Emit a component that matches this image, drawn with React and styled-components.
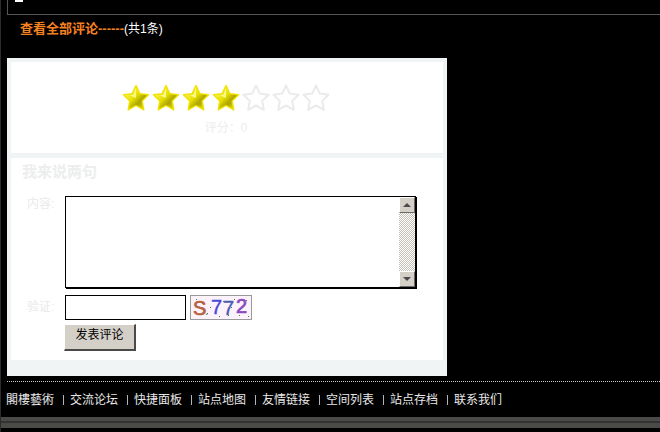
import React from 'react';
import styled, { createGlobalStyle } from 'styled-components';

const GlobalStyle = createGlobalStyle`
  html, body {
    margin: 0;
    padding: 0;
    background: #000;
    overflow: hidden;
  }
  body {
    font-family: "Liberation Sans", "Noto Sans CJK SC", sans-serif;
    font-size: 12px;
  }
`;

const StyledPage = styled.div`
  display: flex;
  flex-direction: column;
  width: 660px;
  height: 432px;
  overflow: hidden;
  background: #000;
  box-sizing: border-box;
  border-left: 1px solid #2c2c2c;
`;

const StyledTopBox = styled.div`
  height: 14px;
  margin-left: 6px;
  padding-left: 7px;
  flex: none;
  box-sizing: content-box;
  border-left: 1px solid #555;
  border-bottom: 1px solid #555;

  i {
    display: block;
    width: 8px;
    height: 2px;
    background: #fff;
  }
`;

const StyledCount = styled.div`
  height: 28px;
  padding-left: 19px;
  flex: none;
  display: flex;
  align-items: center;
  color: #fff;
  line-height: 28px;

  b {
    color: #f58220;
    font-size: 13px;
    font-weight: bold;
  }
`;

const StyledPanel = styled.div`
  width: 440px;
  height: 318px;
  margin: 15px 0 0 6px;
  flex: none;
  background: #f0f4f4;
  padding: 4px 4px 16px;
  box-sizing: border-box;
  display: flex;
  flex-direction: column;
  gap: 5px;
`;

const StyledRating = styled.section`
  height: 91px;
  flex: none;
  background: #fff;
  display: flex;
  flex-direction: column;
  align-items: center;
  padding: 22px 2px 0 0;
  box-sizing: border-box;
`;

const StyledStars = styled.div`
  display: flex;
  gap: 2px;
`;

const StyledRatingText = styled.div`
  margin-top: 8px;
  color: #eceeee;
  font-size: 12px;
  line-height: 16px;
`;

const StyledForm = styled.section`
  flex: 1;
  background: #fff;
  padding: 5px 0 0 11px;
  box-sizing: border-box;
`;

const StyledHeading = styled.h3`
  margin: 0;
  color: #eceeee;
  font-size: 15px;
  font-weight: bold;
  line-height: 17px;
`;

const StyledRow = styled.div`
  display: flex;
  align-items: flex-start;
  margin-top: ${(p) => p.$top}px;
`;

const StyledLabel = styled.label`
  width: 43px;
  padding-left: 5px;
  padding-top: ${(p) => p.$pad}px;
  box-sizing: border-box;
  flex: none;
  color: #e8eaea;
  line-height: 14px;
`;

const StyledTextBox = styled.div`
  width: 351px;
  height: 92px;
  border: 1px solid #000;
  box-sizing: border-box;
  background: #fff;
  display: flex;
  justify-content: flex-end;
  box-shadow: 1px 1px 0 #000;
`;

const StyledScrollbar = styled.div`
  width: 16px;
  display: flex;
  flex-direction: column;
  justify-content: space-between;
  background: repeating-conic-gradient(#c4c0b8 0 25%, #fff 0 50%) 0 0 / 2px 2px;
`;

const StyledArrow = styled.div`
  height: 16px;
  background: #d4d0c8;
  border-style: solid;
  border-width: 1px;
  border-color: #fff #6a6a6a #6a6a6a #fff;
  box-sizing: border-box;
  display: flex;
  align-items: center;
  justify-content: center;

  &::after {
    content: '';
    border-left: 4px solid transparent;
    border-right: 4px solid transparent;
    ${(p) => (p.$down ? 'border-top: 4px solid #4a4a4a;' : 'border-bottom: 4px solid #4a4a4a;')}
  }
`;

const StyledInput = styled.input`
  width: 121px;
  height: 25px;
  margin: 0;
  padding: 0;
  border: 1px solid #000;
  box-sizing: border-box;
  background: #fff;
  box-shadow: none;
  outline: none;
`;

const StyledCaptcha = styled.svg`
  width: 62px;
  height: 25px;
  margin-left: 4px;
  flex: none;
  display: block;
`;

const StyledButtonRow = styled.div`
  padding: 4px 0 0 42px;
`;

const StyledButton = styled.button`
  width: 72px;
  height: 27px;
  margin: 0;
  padding: 0 0 7px;
  background: #d4d0c8;
  color: #000;
  font-family: inherit;
  font-size: 12px;
  border-style: solid;
  border-width: 1px 2px 2px 1px;
  border-color: #fff #4a4a4a #4a4a4a #fff;
  box-sizing: border-box;
`;

const StyledFooter = styled.nav`
  margin: 5px 0 0 6px;
  height: 36px;
  flex: none;
  border-top: 1px dotted #c8c8c8;
  display: flex;
  align-items: center;
  box-sizing: border-box;
  padding-bottom: 2px;
  color: #e8e8e8;
  font-size: 12px;
  white-space: nowrap;

  a:first-child {
    margin-left: -1px;
  }
`;

const StyledSeparator = styled.span`
  width: 1px;
  height: 10px;
  margin: 2px 6px 0 9px;
  background: #aeb4ba;
`;

const StyledBottomBar = styled.div`
  height: 11px;
  flex: none;
  margin-left: -1px;
  background: linear-gradient(#4a4a48 0 4px, #333 4px 6px, #4a4a48 6px);
`;

const LINKS = ['閣樓藝術', '交流论坛', '快捷面板', '站点地图', '友情链接', '空间列表', '站点存档', '联系我们'];
const STAR = 'M14 1.5 L17.8 9.6 L26.5 10.8 L20.2 17 L21.8 25.8 L14 21.5 L6.2 25.8 L7.8 17 L1.5 10.8 L10.2 9.6 Z';
const NOISE = [[6, 4], [17, 18], [12, 8], [24, 5], [29, 21], [33, 6], [38, 20], [44, 4], [49, 20], [56, 5], [58, 21], [20, 12], [41, 12]];

const Star = ({ on, id }) => (
  <svg width="28" height="28" viewBox="0 0 28 28">
    {on ? (
      <>
        <defs>
          <linearGradient id={id} x1="0.1" y1="0.1" x2="0.9" y2="0.9">
            <stop offset="0" stopColor="#fffb7a" />
            <stop offset="0.45" stopColor="#e8e000" />
            <stop offset="0.7" stopColor="#a9a400" />
            <stop offset="1" stopColor="#e6df00" />
          </linearGradient>
        </defs>
        <path d={STAR} fill={`url(#${id})`} stroke="#f2e200" strokeWidth="1.4" strokeLinejoin="round" />
        <path d="M14 4 L14 14 L8 11.5 L11.5 10.5 Z" fill="#fdfca8" opacity="0.8" />
      </>
    ) : (
      <path d={STAR} fill="#fff" stroke="#ebebeb" strokeWidth="2" strokeLinejoin="round" />
    )}
  </svg>
);

const Captcha = () => (
  <StyledCaptcha viewBox="0 0 62 25">
    <rect x="0.5" y="0.5" width="61" height="24" fill="#fbf2fb" stroke="#9a9a9a" />
    {NOISE.map(([x, y]) => (
      <rect key={`${x}-${y}`} x={x} y={y} width="1" height="1" fill="#5a7a40" />
    ))}
    <g fontFamily="'Liberation Sans', sans-serif" fontSize="20">
      <text x="3" y="20" fill="#b5623f" stroke="#b5623f" strokeWidth="0.7">S</text>
      <text x="15" y="20" fontSize="12" fill="#5a9a50">.</text>
      <text x="21" y="19" fill="#4a48d8" stroke="#4a48d8" strokeWidth="0.4">7</text>
      <text x="33" y="20" fill="#4a5cb0" stroke="#4a5cb0" strokeWidth="0.4">7</text>
      <text x="46" y="18" fill="#8a48c0" stroke="#8a48c0" strokeWidth="0.7">2</text>
    </g>
  </StyledCaptcha>
);

export default function App() {
  return (
    <StyledPage>
      <GlobalStyle />
      <StyledTopBox>
        <i />
      </StyledTopBox>
      <StyledCount>
        <b>查看全部评论------</b>(共1条)
      </StyledCount>
      <StyledPanel>
        <StyledRating>
          <StyledStars>
            {[0, 1, 2, 3, 4, 5, 6].map((n) => (
              <Star key={n} id={`star-${n}`} on={n < 4} />
            ))}
          </StyledStars>
          <StyledRatingText>评分：0</StyledRatingText>
        </StyledRating>
        <StyledForm>
          <StyledHeading>我来说两句</StyledHeading>
          <StyledRow $top={16}>
            <StyledLabel $pad={1}>内容:</StyledLabel>
            <StyledTextBox>
              <StyledScrollbar>
                <StyledArrow />
                <StyledArrow $down />
              </StyledScrollbar>
            </StyledTextBox>
          </StyledRow>
          <StyledRow $top={7}>
            <StyledLabel $pad={5}>验证:</StyledLabel>
            <StyledInput type="text" aria-label="验证" />
            <Captcha />
          </StyledRow>
          <StyledButtonRow>
            <StyledButton type="button">发表评论</StyledButton>
          </StyledButtonRow>
        </StyledForm>
      </StyledPanel>
      <StyledFooter>
        {LINKS.map((label, i) => (
          <React.Fragment key={label}>
            {i > 0 && <StyledSeparator />}
            <a>{label}</a>
          </React.Fragment>
        ))}
      </StyledFooter>
      <StyledBottomBar />
    </StyledPage>
  );
}
